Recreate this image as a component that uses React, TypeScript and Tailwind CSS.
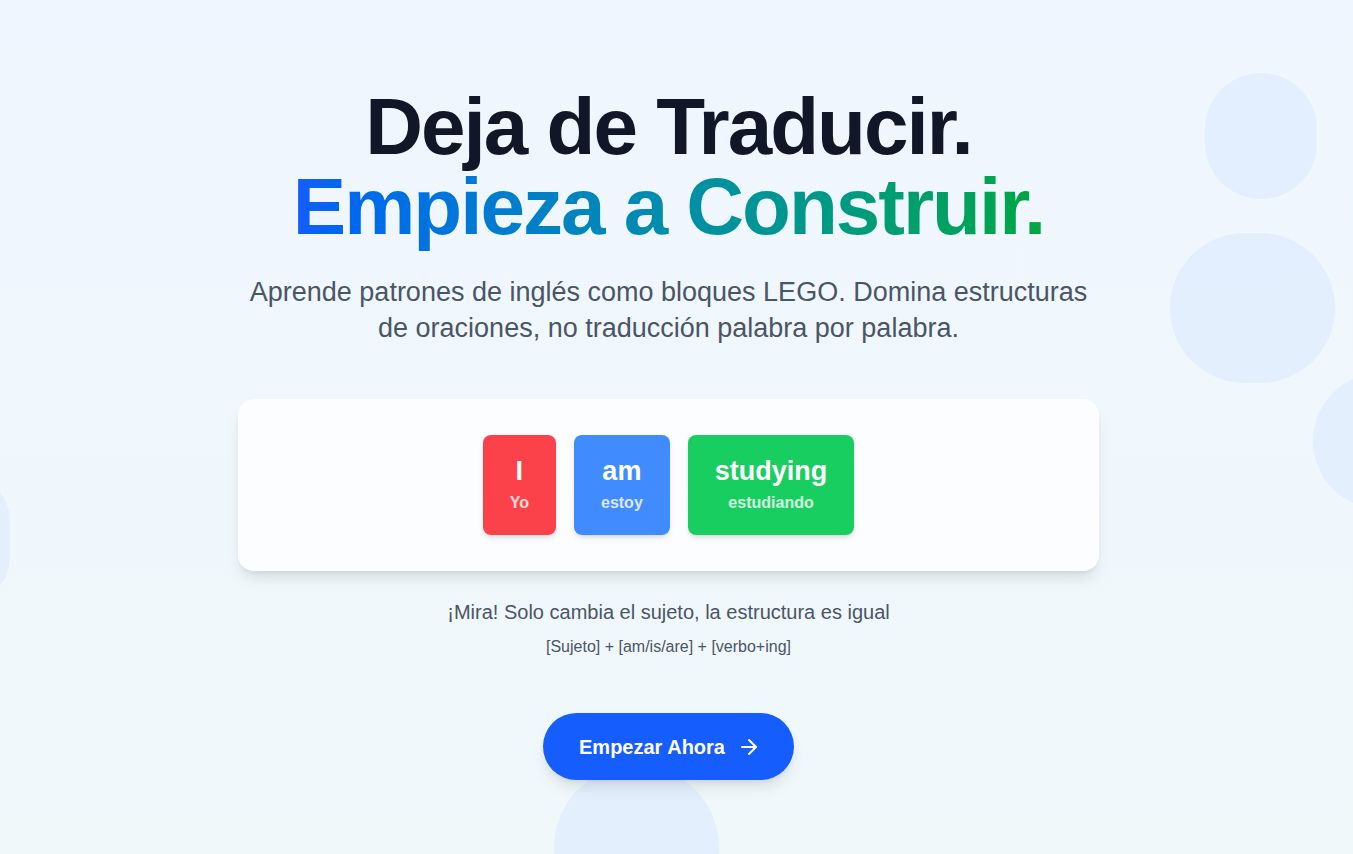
import React from 'react';
import { ArrowRight } from 'lucide-react';

const blocks = [
    { word: 'I', meaning: 'Yo', color: 'bg-red-500/90' },
    { word: 'am', meaning: 'estoy', color: 'bg-blue-500/90' },
    { word: 'studying', meaning: 'estudiando', color: 'bg-green-500/90' },
];

export default function App() {
    return (
        <div className="relative min-h-screen overflow-hidden bg-linear-to-b from-[#eff6ff] to-[#f0f8fa] font-['Liberation_Sans',Arial,sans-serif]">
            {/* soft background blobs */}
            <div className="absolute left-[1205px] top-[73px] w-[112px] h-[126px] rounded-full bg-blue-100/60"></div>
            <div className="absolute left-[1170px] top-[233px] w-[165px] h-[150px] rounded-full bg-blue-100/60"></div>
            <div className="absolute left-[1313px] top-[373px] w-[136px] h-[136px] rounded-full bg-blue-100/60"></div>
            <div className="absolute left-[-80px] top-[476px] w-[90px] h-[126px] rounded-full bg-blue-100/60"></div>
            <div className="absolute left-[554px] top-[765px] w-[165px] h-[165px] rounded-full bg-blue-100/60"></div>

            <div className="relative flex flex-col items-center pt-[87px] pr-4 pb-10">
                <h1 className="text-center text-[80px] leading-[80px] font-bold tracking-tight text-gray-900">
                    <span className="block">Deja de Traducir.</span>
                    <span className="inline-block pb-3 bg-linear-to-r from-blue-600 to-green-600 bg-clip-text text-transparent">
                        Empieza a Construir.
                    </span>
                </h1>

                <p className="mt-[15px] max-w-[850px] text-center text-[27px] leading-[36px] text-gray-600">
                    Aprende patrones de inglés como bloques LEGO. Domina estructuras de oraciones, no traducción palabra por palabra.
                </p>

                <div className="mt-[53px] w-[861px] rounded-2xl bg-white/80 py-9 shadow-lg">
                    <div className="flex justify-center gap-[18px]">
                        {blocks.map((b) => (
                            <div key={b.word} className={`${b.color} flex flex-col items-center rounded-lg px-[27px] py-5 text-white shadow-md`}>
                                <span className="text-[27px] leading-8 font-bold">{b.word}</span>
                                <span className="mt-1 text-base font-bold text-white/80">{b.meaning}</span>
                            </div>
                        ))}
                    </div>
                </div>

                <p className="mt-[27px] text-xl text-gray-600">¡Mira! Solo cambia el sujeto, la estructura es igual</p>
                <p className="mt-[9px] text-base text-gray-600">[Sujeto] + [am/is/are] + [verbo+ing]</p>

                <button className="mt-[54px] flex h-[67px] items-center gap-3 rounded-full bg-blue-600 pl-9 pr-[33px] text-xl font-bold text-white shadow-lg">
                    Empezar Ahora
                    <ArrowRight className="w-6 h-6" />
                </button>
            </div>
        </div>
    );
}
